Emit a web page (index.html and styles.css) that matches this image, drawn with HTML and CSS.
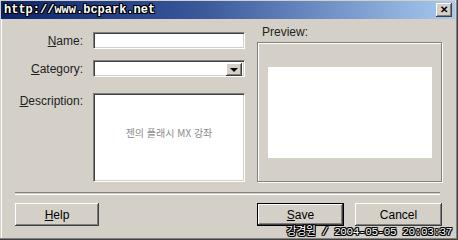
FILE: index.html
```html
<!DOCTYPE html>
<html lang="ko">
<head>
    <meta charset="UTF-8">
    <title>http://www.bcpark.net</title>
    <link rel="stylesheet" href="styles.css">
</head>
<body>
    <div class="window">
        <div class="titlebar">
            <span class="title">http://www.bcpark.net</span>
            <span class="close">&#x2715;</span>
        </div>

        <div class="content">
            <div class="fields">
                <div class="row">
                    <label><u>N</u>ame:</label>
                    <div class="input"></div>
                </div>
                <div class="row row-cat">
                    <label><u>C</u>ategory:</label>
                    <div class="input select">
                        <span class="drop"><span class="arrow"></span></span>
                    </div>
                </div>
                <div class="row row-desc">
                    <label><u>D</u>escription:</label>
                    <div class="input textarea">젠의 플래시 MX 강좌</div>
                </div>
            </div>

            <div class="preview">
                <div class="preview-label">Preview:</div>
                <div class="groupbox">
                    <div class="canvas"></div>
                </div>
            </div>
        </div>

        <div class="separator"></div>

        <div class="buttons">
            <button class="btn help"><u>H</u>elp</button>
            <div class="right-buttons">
                <button class="btn default"><u>S</u>ave</button>
                <button class="btn cancel">Cancel</button>
            </div>
        </div>

        <div class="stamp">강경원 / 2004-05-05 20:03:37</div>
    </div>
</body>
</html>
```

FILE: styles.css
```css
body {
    margin: 0;
    background: #d4d0c8;
    font-family: "Liberation Sans", Arial, sans-serif;
    font-size: 12px;
    color: #000;
}
.window {
    position: relative;
    width: 458px;
    height: 240px;
    box-sizing: border-box;
    background: #d4d0c8;
    box-shadow: inset -1px -1px #404040, inset -2px -2px #808080, inset 1px 1px #d4d0c8, inset 2px 2px #fff;
    overflow: hidden;
}
.titlebar {
    display: flex;
    align-items: center;
    justify-content: space-between;
    height: 18px;
    margin: 1px 3px 0 1px;
    padding: 0 3px 0 3px;
    background: linear-gradient(to right, #0a246a, #3a5a9c 45%, #a6caf0);
}
.title {
    font-family: "Liberation Mono", monospace;
    font-weight: bold;
    font-size: 12px;
    color: #fff;
    text-shadow: 1px 0 #000, -1px 0 #000, 0 1px #000, 0 -1px #000, 1px 1px #000, -1px -1px #000, 1px -1px #000, -1px 1px #000;
}
.close {
    width: 16px;
    height: 14px;
    box-sizing: border-box;
    background: #d4d0c8;
    box-shadow: inset -1px -1px #404040, inset 1px 1px #fff, inset -2px -2px #808080;
    font-size: 10px;
    font-weight: bold;
    line-height: 14px;
    text-align: center;
}
.content {
    display: flex;
    padding: 0 16px 0 15px;
}
.fields {
    width: 230px;
    padding-top: 13px;
}
.row {
    display: flex;
    align-items: center;
    height: 17px;
}
.row-cat { margin-top: 11px; }
.row-desc {
    margin-top: 16px;
    height: 89px;
    align-items: flex-start;
}
.row label {
    width: 68px;
    margin-right: 10px;
    text-align: right;
    color: #222;
}
.row-desc label { padding-top: 1px; }
.input {
    position: relative;
    width: 152px;
    height: 17px;
    box-sizing: border-box;
    background: #fff;
    border: 1px solid;
    border-color: #808080 #fff #fff #808080;
    box-shadow: inset 1px 1px #404040, inset -1px -1px #d4d0c8;
}
.select { display: flex; justify-content: flex-end; padding: 2px; }
.drop {
    display: flex;
    align-items: center;
    justify-content: center;
    width: 16px;
    height: 13px;
    box-sizing: border-box;
    background: #d4d0c8;
    box-shadow: inset -1px -1px #404040, inset 1px 1px #fff, inset -2px -2px #808080;
}
.arrow {
    width: 0;
    height: 0;
    border-left: 4px solid transparent;
    border-right: 4px solid transparent;
    border-top: 4px solid #000;
}
.textarea {
    height: 89px;
    display: flex;
    align-items: center;
    justify-content: center;
    padding-bottom: 10px;
    font-family: "Noto Sans CJK KR", sans-serif;
    font-size: 10px;
    color: #8c8c8c;
}
.preview {
    width: 185px;
    margin-left: 12px;
}
.preview-label {
    margin-top: 6px;
    height: 14px;
    line-height: 14px;
    padding-left: 5px;
    margin-bottom: 3px;
    color: #222;
}
.groupbox {
    height: 140px;
    box-sizing: border-box;
    border: 1px solid #808080;
    box-shadow: inset 1px 1px #fff, 1px 1px #fff;
    padding: 24px 0 0 10px;
}
.canvas {
    width: 164px;
    height: 91px;
    background: #fff;
}
.separator {
    height: 1px;
    margin: 10px 18px 0 15px;
    border-top: 1px solid #808080;
    border-bottom: 1px solid #fff;
}
.buttons {
    display: flex;
    justify-content: space-between;
    margin: 8px 16px 0 15px;
}
.right-buttons { display: flex; gap: 11px; }
.btn {
    height: 23px;
    box-sizing: border-box;
    border: none;
    background: #d4d0c8;
    font-family: "Liberation Sans", Arial, sans-serif;
    font-size: 12px;
    color: #000;
    padding: 0;
    box-shadow: inset -1px -1px #404040, inset 1px 1px #fff, inset -2px -2px #808080;
}
.help { width: 84px; }
.cancel { width: 87px; }
.default {
    width: 87px;
    border: 1px solid #000;
    box-shadow: inset -1px -1px #404040, inset 1px 1px #fff, inset -2px -2px #808080;
}
.stamp {
    position: absolute;
    right: 6px;
    bottom: 2px;
    font-family: "Liberation Mono", "Noto Sans CJK KR", monospace;
    font-size: 11px;
    letter-spacing: -0.4px;
    color: #fff;
    text-shadow: 1px 0 #000, -1px 0 #000, 0 1px #000, 0 -1px #000, 1px 1px #000, -1px -1px #000, 1px -1px #000, -1px 1px #000;
}
```
